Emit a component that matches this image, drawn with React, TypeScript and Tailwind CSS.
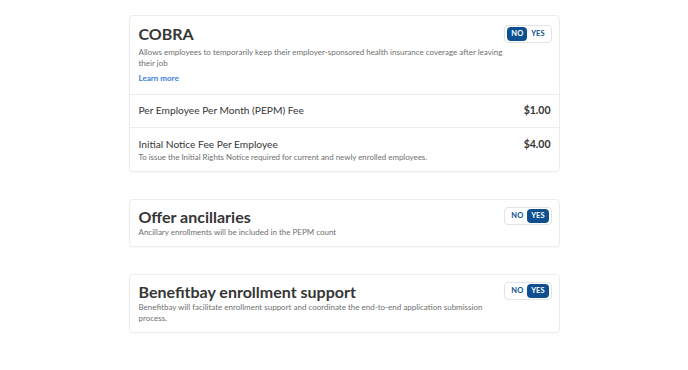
import React from "react";

function Toggle({ yes }: { yes: boolean }) {
  return (
    <div className="flex items-center rounded-[4px] border border-[#e3e3e3] p-[2px] h-[18px] text-[7.5px] font-bold leading-none">
      <span
        className={`rounded-[4px] px-[4px] py-[3px] ${
          yes ? "text-[#0d4f8f]" : "bg-[#0d4f8f] text-white"
        }`}
      >
        NO
      </span>
      <span
        className={`rounded-[4px] px-[4px] py-[3px] ${
          yes ? "bg-[#0d4f8f] text-white" : "text-[#0d4f8f]"
        }`}
      >
        YES
      </span>
    </div>
  );
}

export default function App() {
  return (
    <div
      className="min-h-[370px] w-full bg-white pt-[15px]"
      style={{ fontFamily: "Lato, 'Open Sans', sans-serif" }}
    >
      <div className="mx-auto flex w-[431px] flex-col gap-[27px] text-[#363636]">
        {/* COBRA */}
        <div className="rounded-[4px] border border-[#ececec] shadow-[0_1px_2px_rgba(0,0,0,0.03)]">
          <div className="flex justify-between border-b border-[#ececec] pl-[9px] pr-[7px] pt-[7px] pb-[10px]">
            <div className="w-[372px]">
              <h2 className="text-[16px] font-bold leading-[21px]">COBRA</h2>
              <p className="mt-[3px] text-[8px] leading-[11px] text-[#6f6f6f]">
                Allows employees to temporarily keep their employer-sponsored
                health insurance coverage after leaving their job
              </p>
              <a className="mt-[4px] block text-[8px] font-bold leading-[11px] text-[#3d80e0]">
                Learn more
              </a>
            </div>
            <div className="pt-[2px]">
              <Toggle yes={false} />
            </div>
          </div>
          <div className="flex h-[33px] items-center justify-between border-b border-[#ececec] pl-[9px] pr-[8px] text-[10.2px]">
            <span>Per Employee Per Month (PEPM) Fee</span>
            <span className="text-[10.5px] font-bold">$1.00</span>
          </div>
          <div className="flex justify-between pl-[9px] pr-[8px] pt-[9px] pb-[8px]">
            <div>
              <div className="text-[10.2px] leading-[14px]">
                Initial Notice Fee Per Employee
              </div>
              <div className="mt-[1px] text-[7.9px] leading-[11px] text-[#6f6f6f]">
                To issue the Initial Rights Notice required for current and newly
                enrolled employees.
              </div>
            </div>
            <span className="text-[10.5px] font-bold leading-[14px]">$4.00</span>
          </div>
        </div>

        {/* Offer ancillaries */}
        <div className="flex justify-between rounded-[4px] border border-[#ececec] pl-[9px] pr-[7px] pt-[6px] pb-[8px] shadow-[0_1px_2px_rgba(0,0,0,0.03)]">
          <div>
            <h2 className="text-[16px] font-bold leading-[21px]">Offer ancillaries</h2>
            <p className="text-[8px] leading-[11px] text-[#6f6f6f]">
              Ancillary enrollments will be included in the PEPM count
            </p>
          </div>
          <div className="pt-[1px]">
            <Toggle yes={true} />
          </div>
        </div>

        {/* Benefitbay enrollment support */}
        <div className="flex justify-between rounded-[4px] border border-[#ececec] pl-[9px] pr-[7px] pt-[6px] pb-[8px] shadow-[0_1px_2px_rgba(0,0,0,0.03)]">
          <div className="w-[345px]">
            <h2 className="text-[16px] font-bold leading-[21px]">
              Benefitbay enrollment support
            </h2>
            <p className="text-[8px] leading-[11px] text-[#6f6f6f]">
              Benefitbay will facilitate enrollment support and coordinate the
              end-to-end application submission process.
            </p>
          </div>
          <div className="pt-[1px]">
            <Toggle yes={true} />
          </div>
        </div>
      </div>
    </div>
  );
}
